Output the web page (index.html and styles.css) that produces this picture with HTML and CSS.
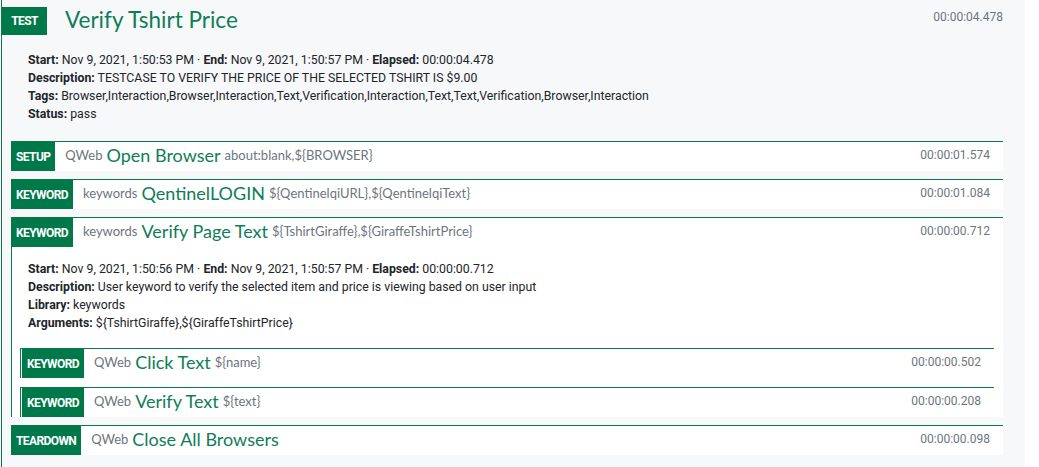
FILE: index.html
```html
<!DOCTYPE html>
<html>
<head>
<meta charset="utf-8">
<link rel="stylesheet" href="styles.css">
</head>
<body>
<div class="test">
  <div class="test-head">
    <span class="badge badge-test">TEST</span>
    <span class="test-title">Verify Tshirt Price</span>
    <span class="dur dur-top">00:00:04.478</span>
  </div>
  <div class="details test-details">
    <div><b>Start:</b> Nov 9, 2021, 1:50:53 PM · <b>End:</b> Nov 9, 2021, 1:50:57 PM · <b>Elapsed:</b> 00:00:04.478</div>
    <div><b>Description:</b> TESTCASE TO VERIFY THE PRICE OF THE SELECTED TSHIRT IS $9.00</div>
    <div><b>Tags:</b> Browser,Interaction,Browser,Interaction,Text,Verification,Interaction,Text,Text,Verification,Browser,Interaction</div>
    <div><b>Status:</b> pass</div>
  </div>
  <div class="steps">
    <div class="step">
      <div class="row">
        <span class="badge">SETUP</span>
        <span class="lib">QWeb</span>
        <span class="name">Open Browser</span>
        <span class="args">about:blank,${BROWSER}</span>
        <span class="dur">00:00:01.574</span>
      </div>
    </div>
    <div class="step">
      <div class="row">
        <span class="badge">KEYWORD</span>
        <span class="lib">keywords</span>
        <span class="name">QentinelLOGIN</span>
        <span class="args">${QentinelqiURL},${QentinelqiText}</span>
        <span class="dur">00:00:01.084</span>
      </div>
    </div>
    <div class="step">
      <div class="row">
        <span class="badge">KEYWORD</span>
        <span class="lib">keywords</span>
        <span class="name">Verify Page Text</span>
        <span class="args">${TshirtGiraffe},${GiraffeTshirtPrice}</span>
        <span class="dur">00:00:00.712</span>
      </div>
      <div class="step-body">
        <div class="details kw-details">
          <div><b>Start:</b> Nov 9, 2021, 1:50:56 PM · <b>End:</b> Nov 9, 2021, 1:50:57 PM · <b>Elapsed:</b> 00:00:00.712</div>
          <div><b>Description:</b> User keyword to verify the selected item and price is viewing based on user input</div>
          <div><b>Library:</b> keywords</div>
          <div><b>Arguments:</b> ${TshirtGiraffe},${GiraffeTshirtPrice}</div>
        </div>
        <div class="nested">
          <div class="step nested-step">
            <div class="row">
              <span class="badge">KEYWORD</span>
              <span class="lib">QWeb</span>
              <span class="name">Click Text</span>
              <span class="args">${name}</span>
              <span class="dur">00:00:00.502</span>
            </div>
          </div>
          <div class="step nested-step">
            <div class="row">
              <span class="badge">KEYWORD</span>
              <span class="lib">QWeb</span>
              <span class="name">Verify Text</span>
              <span class="args">${text}</span>
              <span class="dur">00:00:00.208</span>
            </div>
          </div>
        </div>
      </div>
    </div>
    <div class="step">
      <div class="row">
        <span class="badge">TEARDOWN</span>
        <span class="lib">QWeb</span>
        <span class="name">Close All Browsers</span>
        <span class="dur">00:00:00.098</span>
      </div>
    </div>
  </div>
</div>
</body>
</html>
```
FILE: styles.css
```css
html, body {
  margin: 0;
  padding: 0;
  background: #ffffff;
}

body {
  font-family: Roboto, "Liberation Sans", sans-serif;
  color: #212529;
}

.test {
  width: 1024px;
  min-height: 467px;
  margin-left: 1px;
  border-left: 1px solid #0b7a4b;
  background: #f7f8fa;
  box-sizing: border-box;
  padding-top: 7px;
}

.test-head {
  display: flex;
  align-items: center;
  height: 28px;
}

.badge {
  display: flex;
  align-items: center;
  justify-content: center;
  align-self: stretch;
  background: #00794a;
  color: #ffffff;
  font-family: Roboto, "Liberation Sans", sans-serif;
  font-weight: 700;
  font-size: 12px;
  letter-spacing: -0.6px;
  padding: 0 5px;
  flex: none;
}

.badge-test {
  width: 45px;
  box-sizing: border-box;
}

.test-title {
  margin-left: 18px;
  margin-bottom: 2px;
  font-family: Lato, "Open Sans", sans-serif;
  font-size: 22.5px;
  color: #0f7d57;
  line-height: 28px;
}

.dur {
  margin-left: auto;
  font-family: Roboto, "Liberation Sans", sans-serif;
  font-size: 12px;
  color: #6c757d;
}

.dur-top {
  align-self: flex-start;
  line-height: 18px;
  margin-top: 1px;
  margin-right: 22px;
}

.details {
  font-size: 12.3px;
  line-height: 18px;
  color: #212529;
}

.details b {
  font-weight: 700;
}

.test-details {
  padding: 16px 0 0 26px;
}

.steps {
  margin: 18px 22px 0 9px;
  display: flex;
  flex-direction: column;
  gap: 8px;
}

.step {
  background: #ffffff;
  border-top: 1px solid #0b7a4b;
}

.row {
  display: flex;
  align-items: center;
  height: 29px;
  padding-right: 13px;
}

.row > .lib,
.row > .name,
.row > .args,
.row > .dur {
  margin-bottom: 3px;
}

.row .lib {
  margin-left: 10px;
  font-family: Lato, "Open Sans", sans-serif;
  font-size: 13px;
  color: #6c757d;
}

.row .name {
  margin-left: 4px;
  font-family: Lato, "Open Sans", sans-serif;
  font-size: 18px;
  color: #0f7d57;
}

.row .args {
  margin-left: 4px;
  font-family: Lato, "Open Sans", sans-serif;
  font-size: 13px;
  color: #6c757d;
}

.step-body {
  border-left: 1px solid #0b7a4b;
}

.kw-details {
  padding: 13px 0 0 16px;
}

.nested {
  margin: 16px 9px 0 8px;
  display: flex;
  flex-direction: column;
  gap: 9px;
}

.nested-step {
  border-left: 1px solid #0b7a4b;
  padding-left: 1px;
}
```
